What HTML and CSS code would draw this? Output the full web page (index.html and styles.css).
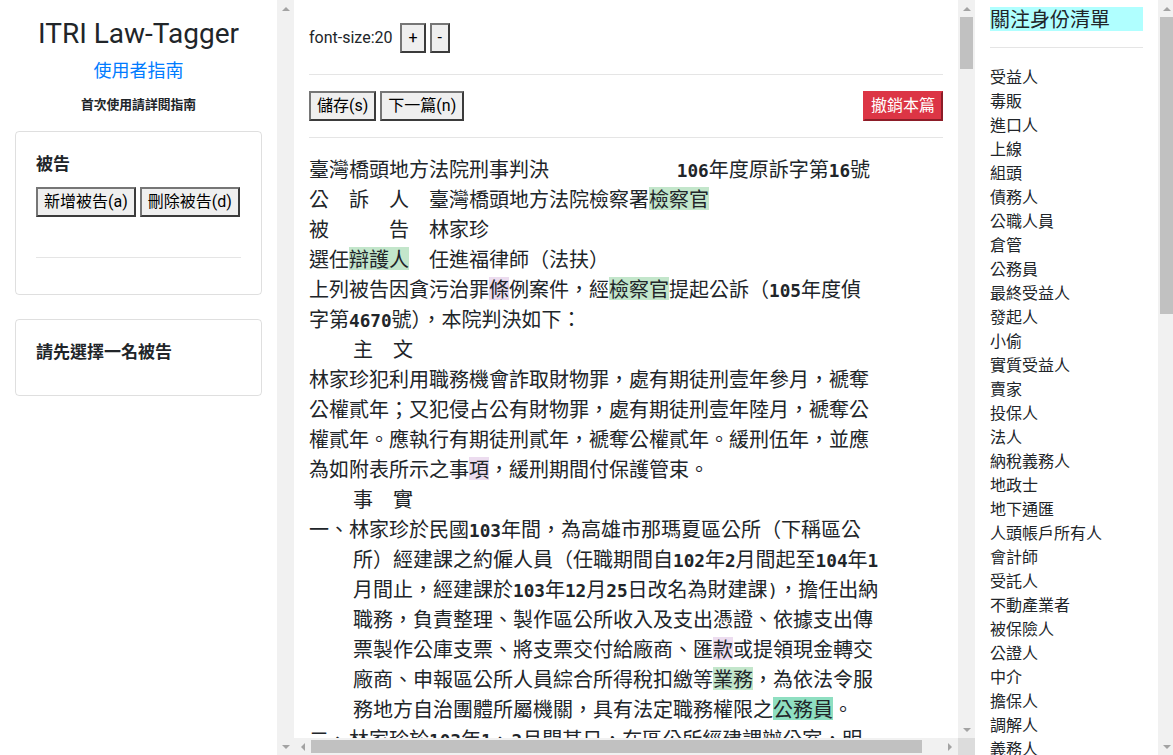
FILE: index.html
```html
<!DOCTYPE html>
<html lang="zh-Hant">
<head>
<meta charset="utf-8">
<title>ITRI Law-Tagger</title>
<link rel="stylesheet" href="styles.css">
</head>
<body>
<aside class="pane left">
  <div class="pane-content left-content">
    <h1 class="brand">ITRI Law-Tagger</h1>
    <a class="guide" href="#">使用者指南</a>
    <p class="hint">首次使用請詳閱指南</p>
    <section class="card">
      <div class="card-body">
        <h5 class="card-title">被告</h5>
        <div class="btn-row"><button class="btn">新增被告(a)</button><button class="btn">刪除被告(d)</button></div>
        <hr class="card-hr">
      </div>
    </section>
    <section class="card">
      <div class="card-body">
        <h5 class="card-title">請先選擇一名被告</h5>
      </div>
    </section>
  </div>
  <div class="vbar">
    <span class="sb-btn up"></span>
    <div class="sb-track"></div>
    <span class="sb-btn down"></span>
  </div>
</aside>

<main class="pane center">
  <div class="pane-content center-content">
    <div class="toolbar">
      <span class="fs-label">font-size:20</span>
      <button class="btn">+</button>
      <button class="btn">-</button>
    </div>
    <hr class="rule rule-top">
    <div class="actions">
      <div class="btn-row"><button class="btn">儲存(s)</button><button class="btn">下一篇(n)</button></div>
      <button class="btn btn-danger">撤銷本篇</button>
    </div>
    <hr class="rule">
    <div class="doc">
      <p>臺灣橋頭地方法院刑事判決<span class="sp">            </span><b class="num">106</b>年度原訴字第<b class="num">16</b>號</p>
      <p>公　訴　人　臺灣橋頭地方法院檢察署<mark class="hl g">檢察官</mark></p>
      <p>被　　　告　林家珍</p>
      <p>選任<mark class="hl g">辯護人</mark>　任進福律師（法扶）</p>
      <p>上列被告因貪污治罪<mark class="hl p">條</mark>例案件，經<mark class="hl g">檢察官</mark>提起公訴（<b class="num">105</b>年度偵字第<b class="num">4670</b>號），本院判決如下：</p>
      <p class="heading">主　文</p>
      <p>林家珍犯利用職務機會詐取財物罪，處有期徒刑壹年參月，褫奪公權貳年；又犯侵占公有財物罪，處有期徒刑壹年陸月，褫奪公權貳年。應執行有期徒刑貳年，褫奪公權貳年。緩刑伍年，並應為如附表所示之事<mark class="hl p">項</mark>，緩刑期間付保護管束。</p>
      <p class="heading">事　實</p>
      <p class="item">一、林家珍於民國<b class="num">103</b>年間，為高雄市那瑪夏區公所（下稱區公所）經建課之約僱人員（任職期間自<b class="num">102</b>年<b class="num">2</b>月間起至<b class="num">104</b>年<b class="num">1</b>月間止，經建課於<b class="num">103</b>年<b class="num">12</b>月<b class="num">25</b>日改名為財建課<span class="half">)</span>，擔任出納職務，負責整理、製作區公所收入及支出憑證、依據支出傳票製作公庫支票、將支票交付給廠商、匯<mark class="hl p">款</mark>或提領現金轉交廠商、申報區公所人員綜合所得稅扣繳等<mark class="hl g">業務</mark>，為依法令服務地方自治團體所屬機關，具有法定職務權限之<mark class="hl t">公務員</mark>。</p>
      <p class="item">二、林家珍於<b class="num">103</b>年<b class="num">1</b>、<b class="num">2</b>月間某日，在區公所經建課辦公室，明知其並無代墊款項之事實，竟意圖為自己不法之所有，基於利用職務上機會詐取財物之犯意，以不詳方式取得廠商之收據，並填載不實之支出項目與金額，持向區公所會計單位申請核銷，致承辦人員陷於錯誤而如數撥付，以此方式詐取公款得逞。</p>
      <p class="item">三、林家珍另於<b class="num">103</b>年<b class="num">6</b>月間，基於侵占公有財物之犯意，將其職務上所保管之零用金予以侵占入己，嗣經區公所清查帳目時發現短少，始悉上情。</p>
    </div>
  </div>
  <div class="vbar">
    <span class="sb-btn up"></span>
    <div class="sb-track"><div class="sb-thumb" style="height:52px"></div></div>
    <span class="sb-btn down"></span>
  </div>
  <div class="hbar">
    <span class="sb-btn left-arrow"></span>
    <div class="sb-track"><div class="sb-thumb" style="width:611px"></div></div>
    <span class="sb-btn right-arrow"></span>
  </div>
  <div class="sb-corner"></div>
</main>

<aside class="pane right">
  <div class="pane-content right-content">
    <h5 class="watch-title">關注身份清單</h5>
    <hr class="rule watch-rule">
    <ul class="watch-list">
      <li>受益人</li><li>毒販</li><li>進口人</li><li>上線</li><li>組頭</li><li>債務人</li><li>公職人員</li><li>倉管</li><li>公務員</li><li>最終受益人</li><li>發起人</li><li>小偷</li><li>實質受益人</li><li>賣家</li><li>投保人</li><li>法人</li><li>納稅義務人</li><li>地政士</li><li>地下通匯</li><li>人頭帳戶所有人</li><li>會計師</li><li>受託人</li><li>不動產業者</li><li>被保險人</li><li>公證人</li><li>中介</li><li>擔保人</li><li>調解人</li><li>義務人</li>
      <li>買家</li><li>下線</li><li>車手</li><li>收水</li><li>負責人</li><li>代理人</li><li>保證人</li><li>債權人</li><li>承攬人</li><li>出租人</li><li>承租人</li><li>董事</li><li>監察人</li><li>股東</li><li>經理人</li><li>受僱人</li><li>雇主</li>
    </ul>
  </div>
  <div class="vbar">
    <span class="sb-btn up"></span>
    <div class="sb-track"><div class="sb-thumb" style="height:297px"></div></div>
    <span class="sb-btn down"></span>
  </div>
</aside>
</body>
</html>
```

FILE: styles.css
```css
* { box-sizing: border-box; }

html, body {
  margin: 0;
  height: 100%;
}

body {
  display: grid;
  grid-template-columns: 294px 681px 200px;
  height: 100vh;
  overflow: hidden;
  font-family: Roboto, "Noto Sans CJK TC", sans-serif;
  font-size: 16px;
  line-height: 1.5;
  color: #212529;
  background: #fff;
}

/* ---------- panes ---------- */
.pane {
  height: 100vh;
  min-width: 0;
  display: grid;
  grid-template-columns: minmax(0, 1fr) 17px;
  grid-template-rows: minmax(0, 1fr);
}
.center {
  grid-template-rows: minmax(0, 1fr) 17px;
}
.pane-content {
  min-width: 0;
  min-height: 0;
  overflow: hidden;
}

/* ---------- drawn scrollbars ---------- */
.vbar,
.hbar {
  display: flex;
  background: #f1f1f1;
}
.vbar {
  flex-direction: column;
}
.sb-btn {
  flex: 0 0 17px;
  height: 17px;
  display: flex;
  align-items: center;
  justify-content: center;
}
.sb-btn::before {
  content: "";
  border: 4px solid transparent;
}
.sb-btn.up::before {
  border-top-width: 0;
  border-bottom-color: #a3a3a3;
}
.sb-btn.down::before {
  border-bottom-width: 0;
  border-top-color: #a3a3a3;
}
.sb-btn.left-arrow::before {
  border-left-width: 0;
  border-right-color: #a3a3a3;
}
.sb-btn.right-arrow::before {
  border-right-width: 0;
  border-left-color: #a3a3a3;
}
.sb-track {
  flex: 1;
  min-width: 0;
  min-height: 0;
}
.vbar .sb-track {
  padding: 0 2px;
}
.hbar .sb-track {
  padding: 2px 0;
}
.vbar .sb-thumb {
  width: 100%;
  background: #c1c1c1;
}
.hbar .sb-thumb {
  height: 100%;
  background: #c1c1c1;
}
.sb-corner {
  background: #dcdcdc;
}

/* ---------- buttons ---------- */
.btn {
  font: inherit;
  font-size: 16px;
  line-height: 24px;
  margin: 0;
  padding: 1px 6px;
  color: #000;
  background: #efefef;
  border: 2px solid;
  border-color: #767676 #3b3b3b #3b3b3b #767676;
  border-radius: 0;
}
.btn-danger {
  color: #fff;
  background: #dc3545;
  border-color: #dc3545 #8c1d28 #8c1d28 #dc3545;
}
.btn-row {
  display: flex;
  gap: 4px;
}

/* ---------- left ---------- */
.left-content {
  padding: 0 15px;
}
.brand {
  margin: 17px 0 0;
  font-size: 28px;
  font-weight: 400;
  line-height: 1.2;
  text-align: center;
}
.guide {
  display: block;
  margin-top: 6px;
  font-size: 18px;
  line-height: 1.5;
  text-align: center;
  color: #007bff;
  text-decoration: none;
}
.hint {
  margin: 11px 0 17px;
  font-size: 12.8px;
  font-weight: 700;
  line-height: 1.5;
  text-align: center;
}
.card {
  border: 1px solid rgba(0, 0, 0, 0.125);
  border-radius: 4px;
  margin-bottom: 24px;
}
.card-body {
  padding: 20px;
}
.card-title {
  margin: 0 0 9px;
  font-size: 17px;
  font-weight: 700;
  line-height: 1.5;
}
.card .btn-row {
  margin-top: 10px;
}
.card-hr {
  margin: 40px 0 16px;
  border: 0;
  border-top: 1px solid rgba(0, 0, 0, 0.1);
}

/* ---------- center ---------- */
.center-content {
  padding: 23px 15px 0;
}
.toolbar {
  display: flex;
  align-items: center;
  gap: 4px;
}
.fs-label {
  margin-right: 4px;
  font-size: 16px;
}
.rule {
  margin: 16px 0;
  border: 0;
  border-top: 1px solid rgba(0, 0, 0, 0.1);
}
.rule-top {
  margin-top: 21px;
}
.actions {
  display: flex;
  justify-content: space-between;
  align-items: center;
}

.doc {
  font-family: "Noto Sans CJK TC", sans-serif;
  font-size: 20px;
  line-height: 30px;
  color: #212529;
}
.doc p {
  width: 571px;
  margin: 0;
}
.doc .heading {
  padding-left: 44px;
}
.doc .item {
  padding-left: 44px;
  text-indent: -44px;
}
.num,
.half,
.sp {
  font-family: "DejaVu Sans Mono", monospace;
  font-size: 17.7px;
  line-height: 1;
}
.num {
  font-weight: 700;
}
.sp {
  white-space: pre;
}
.hl {
  display: inline-block;
  line-height: 30px;
  text-indent: 0;
  color: inherit;
  background: transparent;
}
.hl.g { background: linear-gradient(transparent 3px, #c3e6cb 3px, #c3e6cb 26px, transparent 26px); }
.hl.p { background: linear-gradient(transparent 3px, #ecdcef 3px, #ecdcef 26px, transparent 26px); }
.hl.t { background: linear-gradient(transparent 3px, #8fdfc1 3px, #8fdfc1 26px, transparent 26px); }

/* ---------- right ---------- */
.right-content {
  padding: 7px 15px 0;
}
.watch-title {
  margin: 0;
  font-family: "Noto Sans CJK TC", sans-serif;
  font-size: 20px;
  font-weight: 400;
  line-height: 24px;
  background: #b0ffff;
}
.watch-rule {
  margin: 16px 0;
}
.watch-list {
  list-style: none;
  margin: 0;
  padding: 0;
  font-family: "Noto Sans CJK TC", sans-serif;
  font-size: 16px;
  line-height: 24px;
}
```
